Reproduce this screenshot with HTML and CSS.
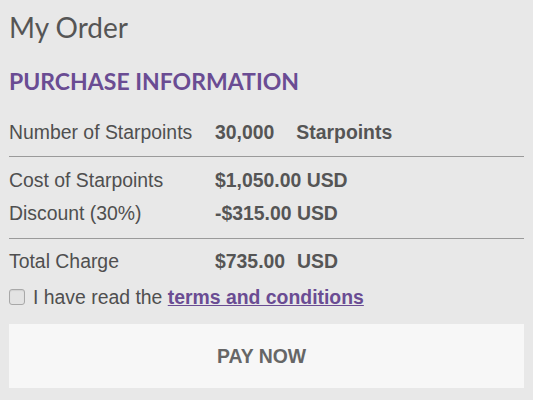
FILE: index.html
```html
<!DOCTYPE html>
<html>
<head>
<meta charset="utf-8">
<link rel="stylesheet" href="styles.css">
</head>
<body>
<div class="page">
  <h1 class="title">My Order</h1>
  <h2 class="section">PURCHASE INFORMATION</h2>
  <div class="group first">
    <div class="row">
      <span class="label">Number of Starpoints</span>
      <span class="value"><span>30,000</span><span class="unit wide">Starpoints</span></span>
    </div>
  </div>
  <div class="group">
    <div class="row">
      <span class="label">Cost of Starpoints</span>
      <span class="value">$1,050.00 USD</span>
    </div>
    <div class="row">
      <span class="label">Discount (30%)</span>
      <span class="value">-$315.00 USD</span>
    </div>
  </div>
  <div class="group last">
    <div class="row">
      <span class="label">Total Charge</span>
      <span class="value"><span>$735.00</span><span class="unit">USD</span></span>
    </div>
  </div>
  <label class="agree">
    <span class="box"></span>
    <span>I have read the <a href="#" class="link">terms and conditions</a></span>
  </label>
  <button class="pay">PAY NOW</button>
</div>
</body>
</html>
```
FILE: styles.css
```css
html, body {
  margin: 0;
  padding: 0;
  background: #e8e8e8;
}
.page {
  padding: 9px 9px 0 9px;
  font-family: "Liberation Sans", Arial, sans-serif;
  color: #4f4f4f;
}
.title {
  margin: 0;
  font-family: Lato, sans-serif;
  font-weight: 400;
  font-size: 28px;
  line-height: 36px;
  color: #555;
}
.section {
  margin: 21px 0 0 0;
  font-family: Lato, sans-serif;
  font-weight: 700;
  font-size: 23px;
  line-height: 30px;
  color: #6a4c93;
}
.group {
  border-bottom: 1px solid #9a9a9a;
  padding: 7px 0 8px 0;
}
.group.first {
  padding-top: 20px;
  padding-bottom: 7px;
}
.group.last {
  border-bottom: none;
  padding-top: 6px;
  padding-bottom: 0;
}
.row {
  display: flex;
  font-size: 19.4px;
  line-height: 33px;
}
.label {
  width: 206px;
  flex: none;
}
.value {
  font-weight: 700;
  color: #555;
}
.unit {
  margin-left: 12px;
}
.unit.wide {
  margin-left: 22px;
}
.agree {
  display: flex;
  align-items: center;
  gap: 8px;
  font-size: 19.4px;
  line-height: 24px;
  margin-top: 7px;
}
.box {
  width: 14px;
  height: 14px;
  border: 1px solid #a8a8a8;
  border-radius: 3px;
  background: #e3e3e3;
  box-shadow: inset 0 1px 1px rgba(0, 0, 0, 0.08);
  flex: none;
}
.link {
  color: #6a4c93;
  font-weight: 700;
  text-decoration: underline;
}
.pay {
  display: block;
  width: 100%;
  margin-top: 15px;
  height: 64px;
  border: none;
  background: #f7f7f7;
  font-family: "Liberation Sans", Arial, sans-serif;
  font-weight: 700;
  font-size: 19.4px;
  color: #666;
  padding: 0 10px 0 0;
}
```
